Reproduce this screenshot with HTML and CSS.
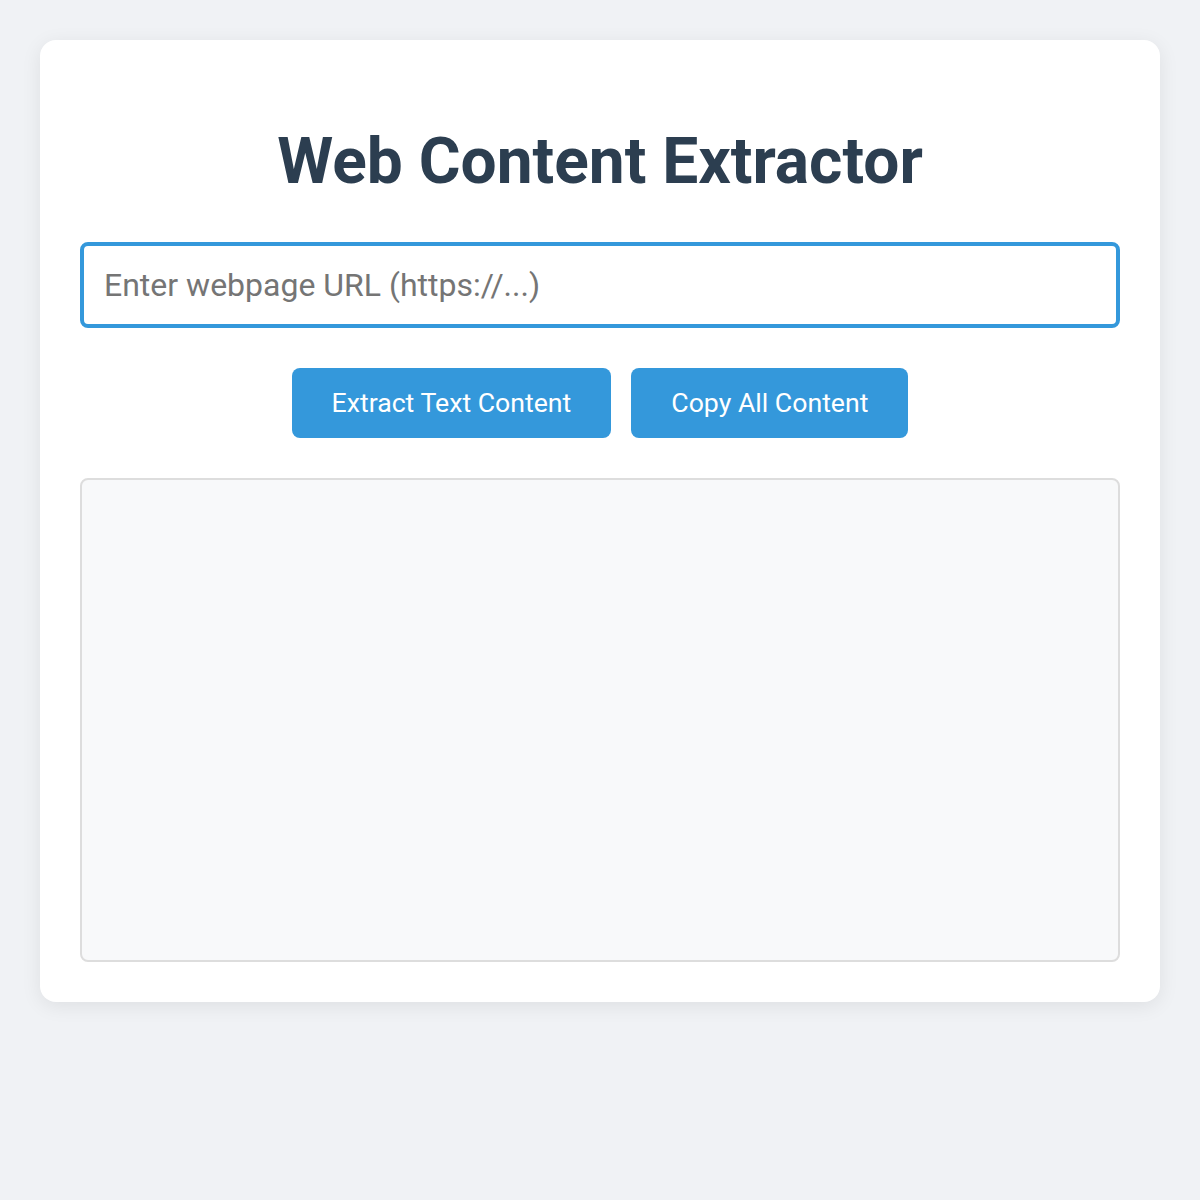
FILE: index.html
```html
<!DOCTYPE html>
<html lang="en">
<head>
    <meta charset="UTF-8">
    <meta name="viewport" content="width=device-width, initial-scale=1.0">
    <title>Web Content Extractor</title>
    <link rel="stylesheet" href="styles.css">
</head>
<body>
    <div class="container">
        <h1>Web Content Extractor</h1>

        <input type="text" id="url-input" class="url-input" placeholder="Enter webpage URL (https://...)">

        <div class="button-row">
            <button class="action-btn">Extract Text Content</button>
            <button class="action-btn">Copy All Content</button>
        </div>

        <div id="output" class="output"></div>
    </div>
</body>
</html>
```

FILE: styles.css
```css
* {
    box-sizing: border-box;
}

body {
    margin: 0;
    padding: 40px;
    background-color: #f0f2f5;
    font-family: Roboto, 'Liberation Sans', sans-serif;
}

.container {
    background-color: white;
    border-radius: 16px;
    padding: 40px;
    box-shadow: 0 4px 20px rgba(0, 0, 0, 0.08);
}

h1 {
    margin: 44px 0 43px;
    text-align: center;
    font-size: 64px;
    font-weight: bold;
    color: #2c3e50;
}

.url-input {
    display: block;
    width: 100%;
    padding: 20px;
    font-size: 32px;
    font-family: Roboto, 'Liberation Sans', sans-serif;
    border: 4px solid #3498db;
    border-radius: 8px;
    outline: none;
    color: #333;
}

.url-input::placeholder {
    color: #757575;
}

.button-row {
    display: flex;
    justify-content: center;
    gap: 20px;
    margin: 40px 0;
}

.action-btn {
    padding: 0 40px;
    height: 70px;
    font-size: 26.67px;
    font-family: Roboto, 'Liberation Sans', sans-serif;
    background-color: #3498db;
    color: white;
    border: none;
    border-radius: 8px;
    cursor: pointer;
}

.output {
    height: 484px;
    background-color: #f8f9fa;
    border: 2px solid #ddd;
    border-radius: 8px;
}
```
